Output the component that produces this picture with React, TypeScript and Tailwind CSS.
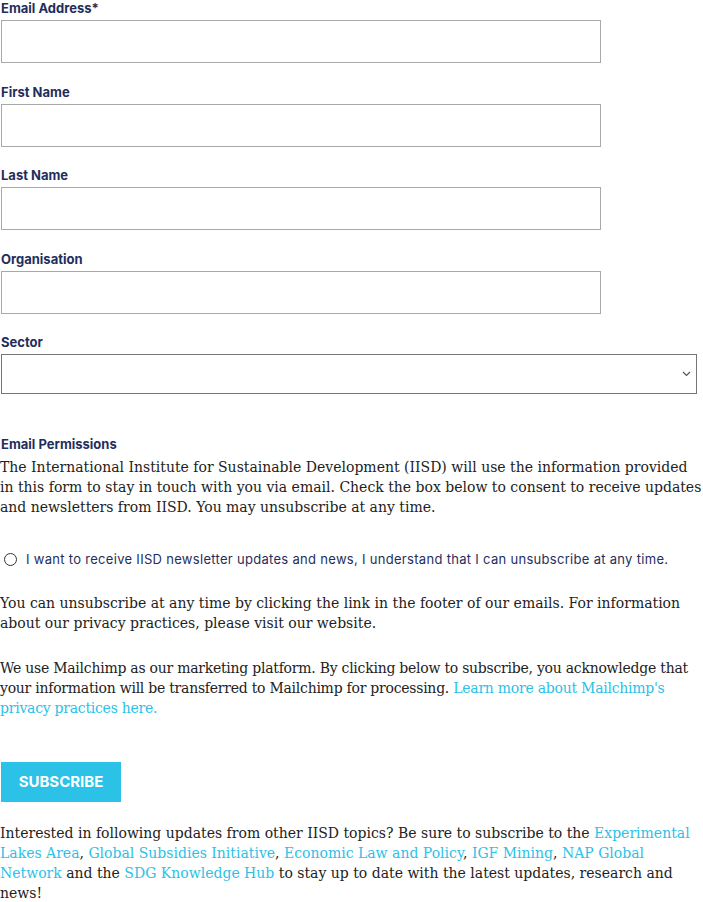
const fields = [
  { label: "Email Address*", h: "h-[84px]" },
  { label: "First Name", h: "h-[83px]" },
  { label: "Last Name", h: "h-[84px]" },
  { label: "Organisation", h: "h-[83px]" },
];

const sans = "font-['Inter','Noto_Sans',sans-serif]";
const serif = "font-['DejaVu_Serif','Liberation_Serif',serif]";
const body = `${serif} -ml-px text-[14px] leading-[20px] text-[#222]`;
const link = "text-[#2cc1e6]";

function Label({ text }: { text: string }) {
  return (
    <div className={`${sans} h-[20px] text-[13px] font-bold leading-[16px] text-[#1f2e5c]`}>
      {text}
    </div>
  );
}

export default function App() {
  return (
    <div className="w-[703px] bg-white pl-px">
      {fields.map((f) => (
        <div key={f.label} className={f.h}>
          <Label text={f.label} />
          <div className="h-[43px] w-[600px] border border-[#a9a9a9] bg-white" />
        </div>
      ))}

      <div>
        <Label text="Sector" />
        <div className="flex h-[40px] w-[696px] items-center justify-end border border-[#767676] bg-white pr-[5px]">
          <svg width="9" height="6" viewBox="0 0 9 6" fill="none">
            <path d="M1 1l3.5 3.5L8 1" stroke="#555" strokeWidth="1.2" />
          </svg>
        </div>
      </div>

      <div className="mt-[42px]">
        <div className={`${sans} mb-[4px] text-[13px] font-bold leading-[17px] text-[#1f2e5c]`}>
          Email Permissions
        </div>
        <p className={body}>
          The International Institute for Sustainable Development (IISD) will use the information provided
          in this form to stay in touch with you via email. Check the box below to consent to receive updates
          and newsletters from IISD. You may unsubscribe at any time.
        </p>
      </div>

      <div className="mt-[32px] flex items-center gap-[9px] pl-[3px]">
        <span className="h-[13px] w-[13px] rounded-full border border-[#333]" />
        <span className={`${sans} text-[13px] leading-[20px] tracking-[0.3px] text-[#1f2e5c]`}>
          I want to receive IISD newsletter updates and news, I understand that I can unsubscribe at any time.
        </span>
      </div>

      <p className={`${body} mt-[24px]`}>
        You can unsubscribe at any time by clicking the link in the footer of our emails. For information
        about our privacy practices, please visit our website.
      </p>

      <p className={`${body} mt-[25px] tracking-[-0.25px]`}>
        We use Mailchimp as our marketing platform. By clicking below to subscribe, you acknowledge that
        your information will be transferred to Mailchimp for processing.{" "}
        <span className={link}>Learn more about Mailchimp's privacy practices here.</span>
      </p>

      <button
        className={`${sans} mt-[44px] flex h-[40px] w-[120px] items-center justify-center bg-[#2cc1e6] text-[15px] font-bold text-white`}
      >
        SUBSCRIBE
      </button>

      <p className={`${body} mt-[21px]`}>
        Interested in following updates from other IISD topics? Be sure to subscribe to the{" "}
        <span className={link}>Experimental Lakes Area</span>, <span className={link}>Global Subsidies Initiative</span>,{" "}
        <span className={link}>Economic Law and Policy</span>, <span className={link}>IGF Mining</span>,{" "}
        <span className={link}>NAP Global Network</span> and the <span className={link}>SDG Knowledge Hub</span> to stay
        up to date with the latest updates, research and news!
      </p>
    </div>
  );
}
